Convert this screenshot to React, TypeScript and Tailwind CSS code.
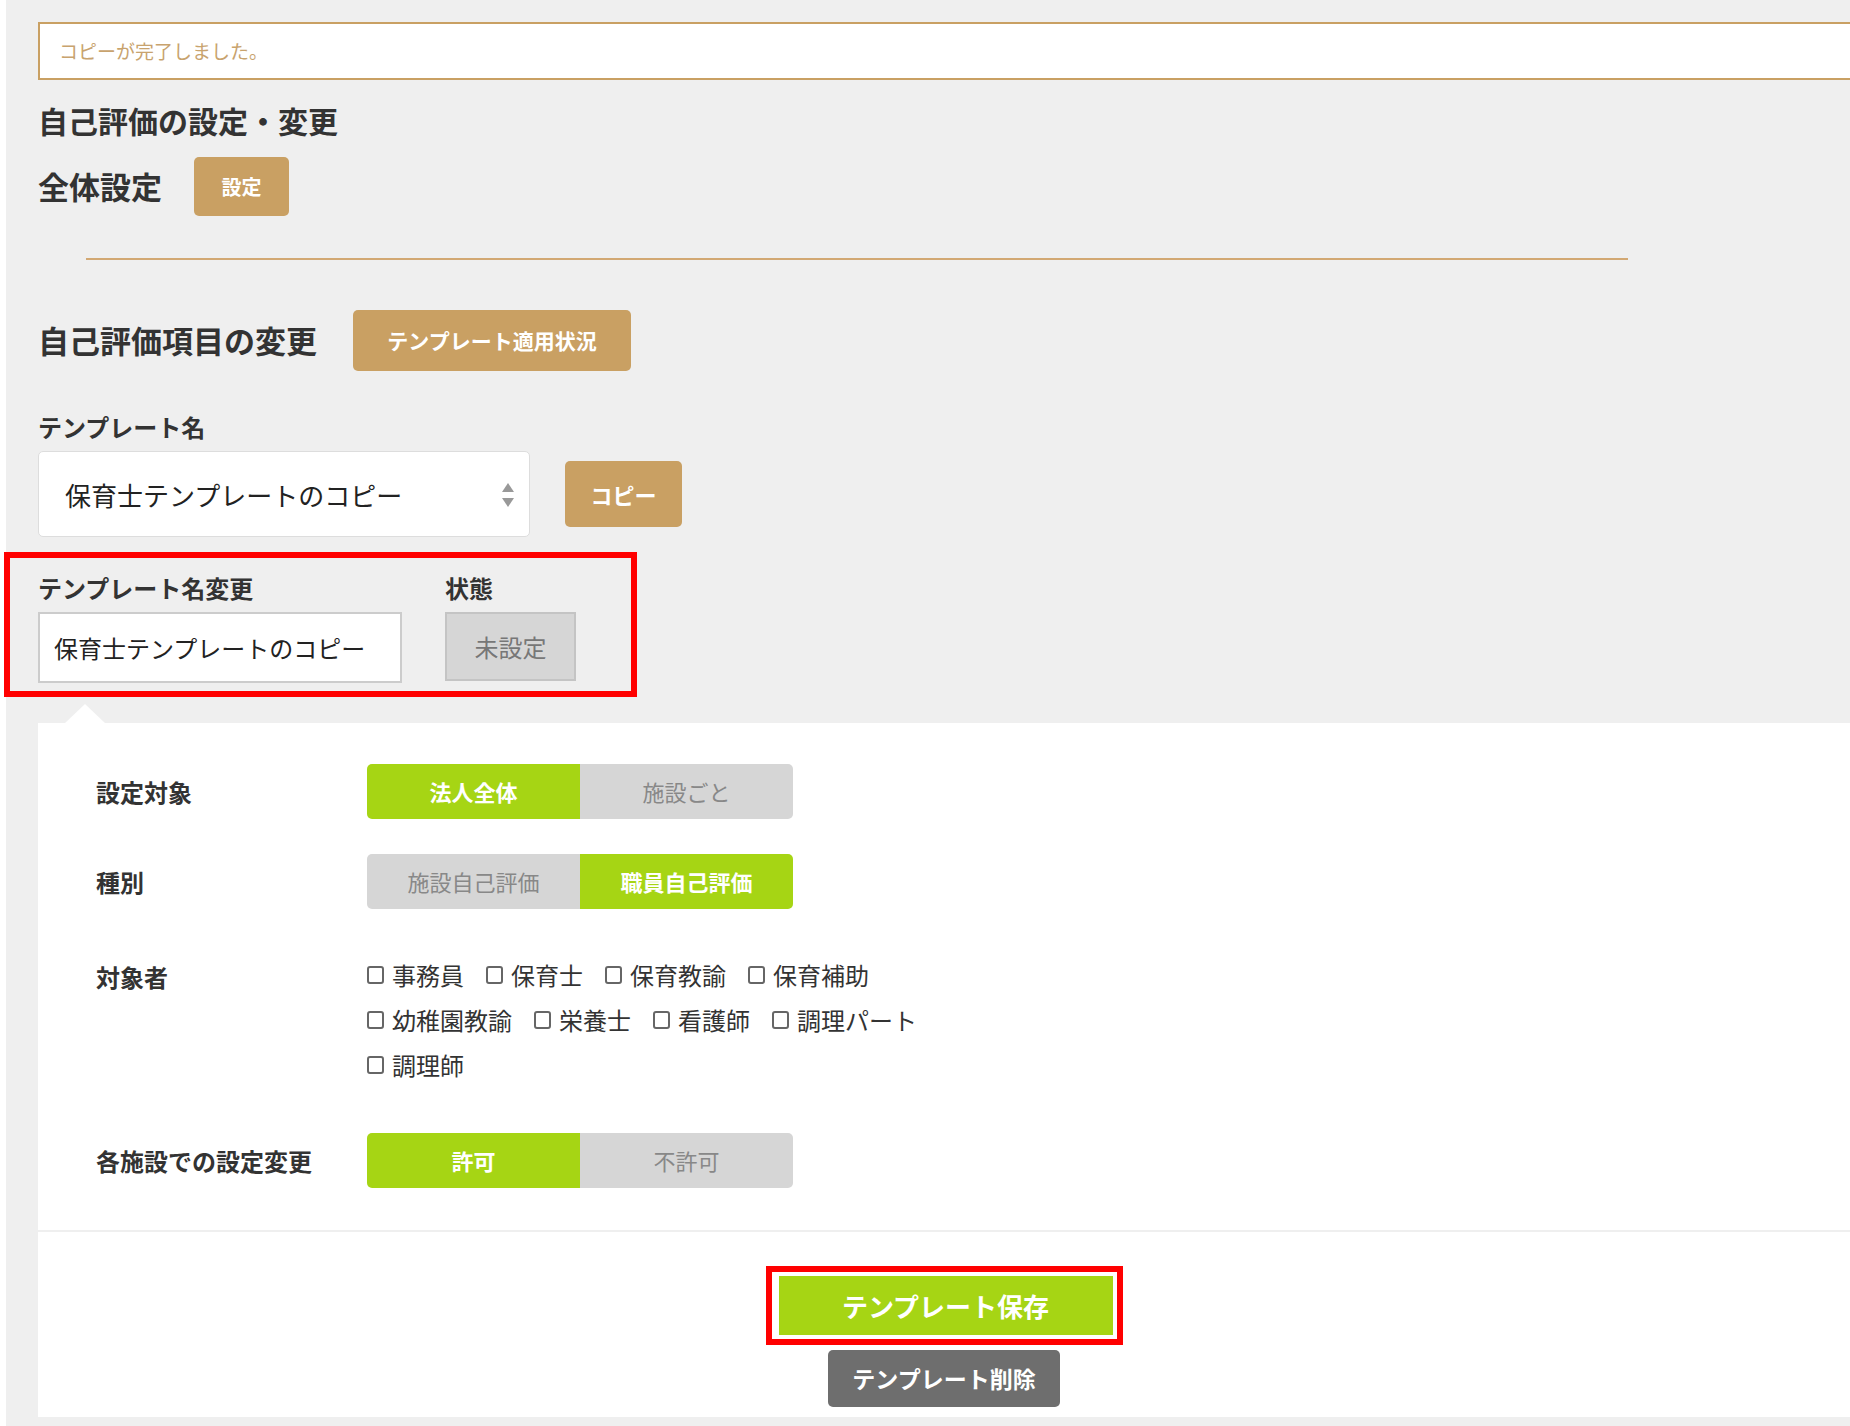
import React from "react";

const font = { fontFamily: '"Noto Sans CJK JP", "Noto Sans", sans-serif' };

const Toggle: React.FC<{ left: string; right: string; active: "left" | "right" }> = ({ left, right, active }) => (
  <div className="flex h-[55px] w-[426px] overflow-hidden rounded-[5px] text-[22px]">
    <div className={`flex w-1/2 items-center justify-center ${active === "left" ? "bg-[#a6d514] font-bold text-white" : "bg-[#d6d6d6] text-[#888]"}`}>{left}</div>
    <div className={`flex w-1/2 items-center justify-center ${active === "right" ? "bg-[#a6d514] font-bold text-white" : "bg-[#d6d6d6] text-[#888]"}`}>{right}</div>
  </div>
);

const Check: React.FC<{ label: string }> = ({ label }) => (
  <label className="mr-[22px] flex items-center gap-[8px] text-[24px] text-[#333]">
    <span className="inline-block h-[18px] w-[17px] rounded-[3px] border-2 border-[#666] bg-white" />
    {label}
  </label>
);

export default function App() {
  return (
    <div style={font} className="flex min-h-[1426px] w-[1850px] overflow-hidden bg-[#efefef]">
      <div className="w-[6px] shrink-0 bg-white" />
      <div className="flex-1 pl-[32px] pt-[22px]">
        <div className="flex h-[58px] items-center border-2 border-r-0 border-[#c9a063] bg-white pl-[19px] text-[19px] text-[#c8a36e]">
          コピーが完了しました。
        </div>
        <h1 className="mt-[18px] text-[30px] font-bold text-[#333]">自己評価の設定・変更</h1>
        <div className="mt-[14px] flex items-center gap-[32px]">
          <h2 className="text-[31px] font-bold text-[#333]">全体設定</h2>
          <button className="h-[59px] w-[95px] rounded-[5px] bg-[#c9a063] text-[20px] font-bold text-white">設定</button>
        </div>
        <div className="ml-[48px] mt-[42px] h-[2px] w-[1542px] bg-[#d2a873]" />
        <div className="mt-[50px] flex items-center gap-[36px]">
          <h2 className="text-[31px] font-bold text-[#333]">自己評価項目の変更</h2>
          <button className="h-[61px] w-[278px] rounded-[5px] bg-[#c9a063] text-[21px] font-bold text-white">テンプレート適用状況</button>
        </div>
        <div className="mt-[38px] text-[24px] font-bold text-[#333]">テンプレート名</div>
        <div className="mt-[6px] flex items-center gap-[35px]">
          <div className="relative flex h-[86px] w-[492px] items-center rounded-[5px] border border-[#ddd] bg-white pl-[26px] text-[26px] text-[#222]">
            保育士テンプレートのコピー
            <svg className="absolute right-[14px] top-[30px]" width="14" height="26" viewBox="0 0 14 26">
              <path d="M7 1 L13 10 H1 Z" fill="#999" />
              <path d="M7 25 L13 16 H1 Z" fill="#999" />
            </svg>
          </div>
          <button className="h-[66px] w-[117px] rounded-[5px] bg-[#c9a063] text-[22px] font-bold text-white">コピー</button>
        </div>
        <div className="ml-[-34px] mt-[15px] flex w-[633px] gap-[43px] border-[6px] border-[#ff0000] pb-[8px] pl-[28px] pt-[12px]">
          <div>
            <div className="text-[24px] font-bold text-[#333]">テンプレート名変更</div>
            <div className="mt-[6px] flex h-[71px] w-[364px] items-center border-2 border-[#ccc] bg-white pl-[14px] text-[24px] text-[#222]">保育士テンプレートのコピー</div>
          </div>
          <div>
            <div className="text-[24px] font-bold text-[#333]">状態</div>
            <div className="mt-[6px] flex h-[69px] w-[131px] items-center justify-center border-2 border-[#c4c4c4] bg-[#d6d6d6] text-[24px] text-[#777]">未設定</div>
          </div>
        </div>
        <div className="relative mt-[26px] bg-white">
          <div className="absolute left-[27px] top-[-19px] h-0 w-0 border-x-[20px] border-b-[19px] border-x-transparent border-b-white" />
          <div className="pl-[58px] pt-[41px]">
            <div className="flex items-center">
              <div className="w-[271px] text-[24px] font-bold text-[#333]">設定対象</div>
              <Toggle left="法人全体" right="施設ごと" active="left" />
            </div>
            <div className="mt-[35px] flex items-center">
              <div className="w-[271px] text-[24px] font-bold text-[#333]">種別</div>
              <Toggle left="施設自己評価" right="職員自己評価" active="right" />
            </div>
            <div className="mt-[48px] flex items-start">
              <div className="w-[271px] pt-[2px] text-[24px] font-bold text-[#333]">対象者</div>
              <div className="flex flex-col gap-[9px]">
                <div className="flex">
                  <Check label="事務員" /><Check label="保育士" /><Check label="保育教諭" /><Check label="保育補助" />
                </div>
                <div className="flex">
                  <Check label="幼稚園教諭" /><Check label="栄養士" /><Check label="看護師" /><Check label="調理パート" />
                </div>
                <div className="flex">
                  <Check label="調理師" />
                </div>
              </div>
            </div>
            <div className="mt-[50px] flex items-center">
              <div className="w-[271px] text-[24px] font-bold text-[#333]">各施設での設定変更</div>
              <Toggle left="許可" right="不許可" active="left" />
            </div>
          </div>
          <div className="mt-[42px] h-[2px] bg-[#efefef]" />
          <div className="flex flex-col items-center pb-[10px] pt-[34px]">
            <div className="border-[6px] border-[#ff0000] bg-white py-[4px] pl-[7px] pr-[4px]">
              <button className="h-[59px] w-[334px] bg-[#a6d514] text-[26px] font-bold text-white">テンプレート保存</button>
            </div>
            <button className="mt-[5px] h-[57px] w-[232px] rounded-[5px] bg-[#6e6e6e] text-[23px] font-bold text-white">テンプレート削除</button>
          </div>
        </div>
      </div>
    </div>
  );
}
